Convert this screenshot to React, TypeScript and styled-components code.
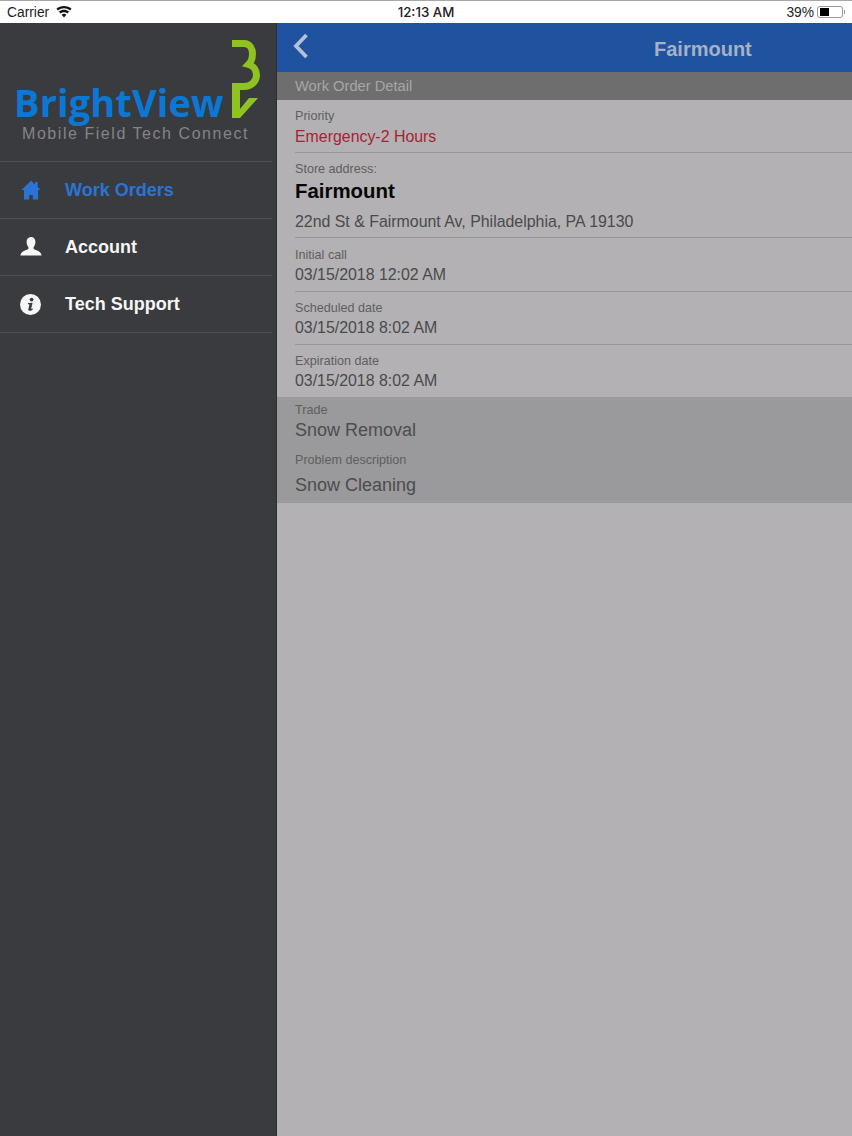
import styled, { createGlobalStyle } from 'styled-components'
import type { ReactNode } from 'react'

const GlobalStyle = createGlobalStyle`
  html, body {
    margin: 0;
    padding: 0;
    background: #b3b1b3;
  }
  * {
    box-sizing: border-box;
  }
  body {
    font-family: "Liberation Sans", Arial, sans-serif;
  }
`

type NavItem = {
  label: string;
  icon: ReactNode;
  active?: boolean;
}

const HomeIcon = () => (
  <svg width="20" height="20" viewBox="0 0 20 20">
    <path d="M10 .8 L19.6 10 L17 10 L17 19.4 L11.8 19.4 L11.8 15 L8.2 15 L8.2 19.4 L3 19.4 L3 10 L.4 10 Z" fill="currentColor" />
    <rect x="14" y="2" width="2.6" height="5" fill="currentColor" />
  </svg>
)

const UserIcon = () => (
  <svg width="22" height="20" viewBox="0 0 22 20">
    <path d="M11 0 C14 0 15.4 2.2 15.4 5 C15.4 7.4 14.4 9.2 13.6 10.2 C13.2 11.6 14 12.4 15.6 13 C18.4 14 21 14.8 21.6 18.6 L.4 18.6 C1 14.8 3.6 14 6.4 13 C8 12.4 8.8 11.6 8.4 10.2 C7.6 9.2 6.6 7.4 6.6 5 C6.6 2.2 8 0 11 0 Z" fill="currentColor" />
  </svg>
)

const InfoIcon = () => (
  <svg width="21" height="21" viewBox="0 0 21 21">
    <circle cx="10.5" cy="10.5" r="10.5" fill="currentColor" />
    <circle cx="11.6" cy="5.6" r="1.9" fill="#3a3b3e" />
    <path d="M8 9 L12.6 8.7 L11.2 14.6 C11.1 15.2 11.5 15.3 12.6 14.6 L12.9 15.3 C11.6 16.6 10.4 17 9.3 16.8 C8.4 16.6 8.2 15.9 8.4 15 L9.4 10.4 L7.9 10 Z" fill="#3a3b3e" />
  </svg>
)

const navItems: NavItem[] = [
  { label: 'Work Orders', icon: <HomeIcon />, active: true },
  { label: 'Account', icon: <UserIcon /> },
  { label: 'Tech Support', icon: <InfoIcon /> },
]

export default function App() {
  return (
    <>
      <GlobalStyle />
      <Page>
        <StatusBar>
          <StatusLeft>
            Carrier
            <svg width="16" height="12" viewBox="0 0 16 12">
              <path d="M8 11.6 L5.6 8.7 C7 7.5 9 7.5 10.4 8.7 Z" fill="#111" />
              <path d="M4.5 7.4 L3 5.6 C5.8 3.2 10.2 3.2 13 5.6 L11.5 7.4 C9.4 5.7 6.6 5.7 4.5 7.4 Z" fill="#111" />
              <path d="M2 4.5 L.4 2.7 C4.6 -.9 11.4 -.9 15.6 2.7 L14 4.5 C10.4 1.5 5.6 1.5 2 4.5 Z" fill="#111" />
            </svg>
          </StatusLeft>
          <StatusTime>12:13 AM</StatusTime>
          <StatusRight>
            39%
            <BatteryShell>
              <BatteryLevel />
            </BatteryShell>
            <BatteryTip />
          </StatusRight>
        </StatusBar>
        <Columns>
          <Sidebar>
            <LogoArea>
              <LogoRow>
                <LogoWord>BrightView</LogoWord>
                <LogoMark width="32" height="80" viewBox="0 0 32 80">
                  <path d="M2 4.5 L14 4.5 C20 4.5 22.5 10 22.5 15 C22.5 20 21 23 18.5 25.5 C23.5 27 26.5 31 26.5 36 C26.5 43 20.5 47.5 14 47.5 L2 47.5" fill="none" stroke="#8fc31f" strokeWidth="7" />
                  <path d="M2 45 L2 79 L10 79 L28 59 L19 59 L10 70 L10 45 Z" fill="#8fc31f" />
                </LogoMark>
              </LogoRow>
              <LogoTagline>Mobile Field Tech Connect</LogoTagline>
            </LogoArea>
            <Nav>
              {navItems.map((item) => (
                <NavRow key={item.label} $active={item.active}>
                  <NavIcon>{item.icon}</NavIcon>
                  {item.label}
                </NavRow>
              ))}
            </Nav>
          </Sidebar>
          <Main>
            <Header>
              <BackButton width="18" height="28" viewBox="0 0 18 28">
                <path d="M14.5 3 L4 14 L14.5 25" fill="none" stroke="#b4c2d4" strokeWidth="3.8" />
              </BackButton>
              <HeaderTitle>Fairmount</HeaderTitle>
            </Header>
            <SubHeader>Work Order Detail</SubHeader>
            <Field>
              <Label>Priority</Label>
              <Value $urgent>Emergency-2 Hours</Value>
            </Field>
            <StoreField>
              <Label>Store address:</Label>
              <StoreName>Fairmount</StoreName>
              <Value>22nd St &amp; Fairmount Av, Philadelphia, PA 19130</Value>
            </StoreField>
            <InitialField>
              <Label>Initial call</Label>
              <Value>03/15/2018 12:02 AM</Value>
            </InitialField>
            <DateField>
              <Label>Scheduled date</Label>
              <Value>03/15/2018 8:02 AM</Value>
            </DateField>
            <LastField>
              <Label>Expiration date</Label>
              <Value>03/15/2018 8:02 AM</Value>
            </LastField>
            <TradeBlock>
              <Label>Trade</Label>
              <LargeValue>Snow Removal</LargeValue>
              <ProblemLabel>Problem description</ProblemLabel>
              <LargeValue>Snow Cleaning</LargeValue>
            </TradeBlock>
          </Main>
        </Columns>
      </Page>
    </>
  )
}

const Page = styled.div`
  display: flex;
  flex-direction: column;
  width: 852px;
  height: 1136px;
  overflow: hidden;
`

const StatusBar = styled.div`
  display: grid;
  grid-template-columns: 1fr auto 1fr;
  align-items: center;
  height: 23px;
  padding: 0 7px;
  background: #fff;
  border-top: 1px solid #a8a8a8;
  color: #222;
  font-size: 13.8px;
`

const StatusLeft = styled.div`
  display: flex;
  align-items: center;
  gap: 7px;
`

const StatusTime = styled.div`
  font-family: Inter, "Liberation Sans", sans-serif;
  font-weight: 500;
  font-size: 13.3px;
`

const StatusRight = styled.div`
  display: flex;
  align-items: center;
  justify-content: flex-end;
  gap: 3px;
`

const BatteryShell = styled.div`
  display: flex;
  width: 26px;
  height: 12px;
  padding: 1px 2px;
  border: 1px solid #999;
  border-radius: 3px;
`

const BatteryLevel = styled.div`
  width: 9px;
  background: #000;
`

const BatteryTip = styled.div`
  width: 1px;
  height: 4px;
  margin-left: -2px;
  background: #999;
`

const Columns = styled.div`
  display: flex;
  flex: 1;
  min-height: 0;
`

const Sidebar = styled.div`
  display: flex;
  flex-direction: column;
  flex: 0 0 277px;
  padding-right: 5px;
  background: #3a3b3e;
  box-shadow: inset -1px 0 0 #2e2e30;
`

const LogoArea = styled.div`
  display: flex;
  flex-direction: column;
  height: 138px;
  padding: 15px 0 0 14px;
`

const LogoRow = styled.div`
  display: flex;
  align-items: flex-end;
  height: 81px;
`

const LogoWord = styled.div`
  margin-bottom: -3px;
  color: #0b78d6;
  font-family: "Open Sans", "Liberation Sans", sans-serif;
  font-size: 38px;
  font-weight: 700;
  letter-spacing: 0.1px;
  line-height: 40px;
`

const LogoMark = styled.svg`
  flex-shrink: 0;
  margin-left: 6px;
`

const LogoTagline = styled.div`
  margin: 6px 0 0 8px;
  color: #848588;
  font-size: 16px;
  letter-spacing: 1.55px;
  line-height: 18px;
  white-space: nowrap;
`

const Nav = styled.nav`
  display: flex;
  flex-direction: column;
  border-top: 1px solid #505154;
`

const NavRow = styled.div<{ $active?: boolean }>`
  display: flex;
  align-items: center;
  height: 57px;
  border-bottom: 1px solid #505154;
  color: ${(p) => (p.$active ? '#2b74d6' : '#f6f6f6')};
  font-size: 18px;
  font-weight: 700;
`

const NavIcon = styled.span`
  display: flex;
  align-items: center;
  justify-content: center;
  width: 65px;
  padding-right: 4px;
`

const Main = styled.div`
  display: flex;
  flex-direction: column;
  flex: 1;
  background: #b3b1b3;
`

const Header = styled.div`
  display: flex;
  align-items: center;
  position: relative;
  height: 49px;
  padding-left: 15px;
  background: #1f53a0;
`

const BackButton = styled.svg`
  margin-top: -3px;
`

const HeaderTitle = styled.div`
  position: absolute;
  left: 377px;
  top: 15px;
  color: #a4b2c5;
  font-size: 20px;
  font-weight: 700;
  line-height: 22px;
`

const SubHeader = styled.div`
  display: flex;
  align-items: center;
  height: 28px;
  padding-left: 18px;
  background: #6f6e6f;
  color: #a7a6a7;
  font-size: 14.7px;
`

const Field = styled.div`
  display: flex;
  flex-direction: column;
  gap: 4px;
  height: 53px;
  margin-left: 18px;
  padding-top: 9px;
  border-bottom: 1px solid #979597;
`

const StoreField = styled(Field)`
  height: 85px;
  gap: 0;
`

const InitialField = styled(Field)`
  height: 54px;
  padding-top: 10px;
  gap: 3px;
`

const DateField = styled(Field)`
  gap: 3px;
`

const LastField = styled(DateField)`
  height: 52px;
  border-bottom: 0;
`

const Label = styled.div`
  color: #5f5e60;
  font-size: 12.6px;
  line-height: 15px;
`

const Value = styled.div<{ $urgent?: boolean }>`
  color: ${(p) => (p.$urgent ? '#a81f33' : '#4a4a4c')};
  font-size: 15.9px;
  line-height: 17px;
`

const StoreName = styled.div`
  margin: 2px 0 10px;
  color: #060606;
  font-size: 20.4px;
  font-weight: 700;
  line-height: 24px;
`

const TradeBlock = styled.div`
  display: flex;
  flex-direction: column;
  height: 106px;
  padding: 6px 0 0 18px;
  background: #9a999b;
`

const LargeValue = styled.div`
  margin-top: 2px;
  color: #4d4c4e;
  font-size: 18px;
  line-height: 21px;
`

const ProblemLabel = styled(Label)`
  margin-top: 12px;
  margin-bottom: 5px;
`
